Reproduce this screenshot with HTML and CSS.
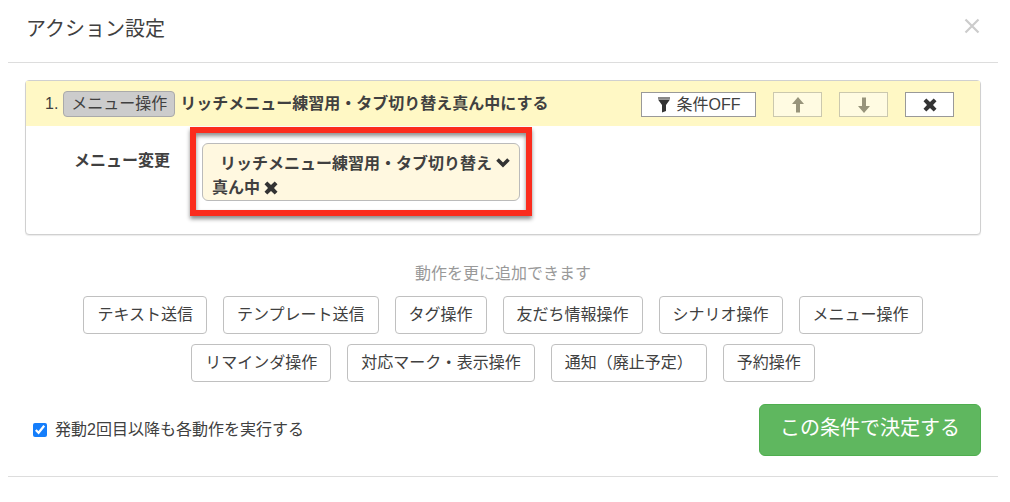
FILE: index.html
```html
<!DOCTYPE html>
<html lang="ja">
<head>
    <meta charset="utf-8">
    <title>アクション設定</title>
    <link rel="stylesheet" href="styles.css">
</head>
<body>
    <div class="modal">
        <div class="modal-header">
            <h1 class="modal-title">アクション設定</h1>
            <button type="button" class="close" aria-label="閉じる">
                <svg width="16" height="16" viewBox="0 0 16 16"><path d="M1.500 1.500l13 13M14.500 1.500l-13 13" stroke="#cccccc" stroke-width="2.200" fill="none"/></svg>
            </button>
        </div>

        <form class="modal-body">
            <div class="panel">
                <div class="panel-heading">
                    <span>1.</span>
                    <span class="badge">メニュー操作</span>
                    <strong class="panel-title">リッチメニュー練習用・タブ切り替え真ん中にする</strong>
                    <div class="tools">
                        <button type="button" class="tool tool-wide">
                            <svg width="14" height="16" viewBox="0 0 14 16"><path d="M1 1h12" stroke="#888" stroke-width="2"/><path d="M1 2.500h12L9 8v6l-4 1.500V8z" fill="#333"/></svg>
                            <span>条件OFF</span>
                        </button>
                        <button type="button" class="tool" disabled aria-label="上へ">
                            <svg width="14" height="16" viewBox="0 0 14 16"><path d="M7 0L13 7H9v8.500H5V7H1z" fill="#333"/></svg>
                        </button>
                        <button type="button" class="tool" disabled aria-label="下へ">
                            <svg width="14" height="16" viewBox="0 0 14 16"><path d="M7 16L1 9H5V0.500h4V9h4z" fill="#333"/></svg>
                        </button>
                        <button type="button" class="tool" aria-label="削除">
                            <svg width="14" height="14" viewBox="0 0 14 14"><path d="M3.300 0.500L7 4l3.700-3.500 2.800 2.800L10 7l3.500 3.700-2.800 2.800L7 10l-3.700 3.500L0.500 10.700 4 7 0.500 3.300z" fill="#333"/></svg>
                        </button>
                    </div>
                </div>
                <div class="panel-content">
                    <label class="field-label" for="menu">メニュー変更</label>
                    <div class="highlight">
                        <button type="button" class="menu-select" id="menu">
                            <span class="menu-name">リッチメニュー練習用・タブ切り替え真ん中
                                <svg width="14" height="14" viewBox="0 0 14 14"><path d="M3.300 0.500L7 4l3.700-3.500 2.800 2.800L10 7l3.500 3.700-2.800 2.800L7 10l-3.700 3.500L0.500 10.700 4 7 0.500 3.300z" fill="#333"/></svg></span>
                            <svg class="chevron" width="14" height="24" viewBox="0 0 14 24"><path d="M1.500 7.500L7 13l5.500-5.500" stroke="#333" stroke-width="3.600" fill="none"/></svg>
                        </button>
                    </div>
                </div>
            </div>

            <p class="hint">動作を更に追加できます</p>
            <div class="actions">
                <button type="button" class="action">テキスト送信</button>
                <button type="button" class="action">テンプレート送信</button>
                <button type="button" class="action">タグ操作</button>
                <button type="button" class="action">友だち情報操作</button>
                <button type="button" class="action">シナリオ操作</button>
                <button type="button" class="action">メニュー操作</button>
                <button type="button" class="action">リマインダ操作</button>
                <button type="button" class="action">対応マーク・表示操作</button>
                <button type="button" class="action">通知（廃止予定）</button>
                <button type="button" class="action">予約操作</button>
            </div>

            <div class="bottom">
                <div class="repeat">
                    <input type="checkbox" id="repeat" class="check" checked>
                    <label for="repeat">発動2回目以降も各動作を実行する</label>
                </div>
                <button type="submit" class="submit">この条件で決定する</button>
            </div>
        </form>
    </div>
</body>
</html>
```

FILE: styles.css
```css
* {
    box-sizing: border-box;
}

body {
    margin: 0;
    background-color: #fff;
    color: #404040;
    font-family: "Liberation Sans", "Noto Sans CJK JP", sans-serif;
    font-size: 16px;
    line-height: 24px;
}

button {
    font-family: inherit;
    font-size: 16px;
    line-height: 24px;
    color: #404040;
    cursor: pointer;
}

svg {
    flex: none;
}

.modal {
    margin: 0 12px 0 8px;
}

.modal-header {
    display: flex;
    justify-content: space-between;
    align-items: flex-start;
    padding: 15px 18px 19px;
    border-bottom: 1px solid #ddd;
}

.modal-title {
    margin: 0;
    font-size: 20px;
    font-weight: normal;
    line-height: 28px;
}

.close {
    display: flex;
    margin-top: 3px;
    padding: 0;
    border: none;
    background: none;
}

.modal-body {
    padding: 17px 17px 20px;
    border-bottom: 1px solid #ddd;
}

.panel {
    border: 1px solid #d0d0d0;
    border-radius: 4px;
    background-color: #fff;
    box-shadow: 0 1px 1px rgba(0, 0, 0, 0.08);
}

.panel-heading {
    display: flex;
    align-items: center;
    gap: 5px;
    padding: 9px 26px 9px 19px;
    background-color: #fff8c5;
}

.badge {
    padding: 0 7px;
    border: 1px solid #aaa;
    border-radius: 4px;
    background-color: #ccc;
    white-space: nowrap;
}

.panel-title {
    white-space: nowrap;
}

.tools {
    display: flex;
    gap: 17px;
    margin-left: auto;
    padding-top: 2px;
}

.tool {
    display: flex;
    justify-content: center;
    align-items: center;
    gap: 6px;
    width: 49px;
    height: 25px;
    padding: 0;
    border: 1px solid #999;
    background-color: #fff;
}

.tool-wide {
    width: 115px;
}

.tool:disabled {
    opacity: 0.5;
}

/* メニュー変更の行 */
.panel-content {
    display: flex;
    align-items: flex-start;
    padding: 1px 20px 18px 48px;
}

.field-label {
    margin: 22px 20px 0 0;
    font-weight: bold;
    white-space: nowrap;
}

/* 赤枠の強調 */
.highlight {
    padding: 10px 6px 9px;
    border: 6px solid #fb2c1d;
    box-shadow: 0 3px 4px rgba(0, 0, 0, 0.45), inset 0 3px 4px rgba(0, 0, 0, 0.45);
}

.menu-select {
    display: flex;
    align-items: flex-start;
    width: 318px;
    padding: 8px 9px 0;
    border: 1px solid #bbb;
    border-radius: 6px;
    background-color: #fff8e0;
    font-weight: bold;
    text-align: left;
}

.menu-name {
    flex: 1;
    text-indent: 8px;
}

.menu-name svg {
    vertical-align: -2px;
}

.hint {
    margin: 27px 0 10px;
    color: #999;
    text-align: center;
}

.actions {
    display: flex;
    flex-wrap: wrap;
    justify-content: center;
    gap: 10px 16px;
}

.action {
    padding: 6px 13px;
    border: 1px solid #c0c0c0;
    border-radius: 4px;
    background-color: #fff;
    white-space: nowrap;
}

.bottom {
    display: flex;
    justify-content: space-between;
    align-items: center;
    margin-top: 22px;
}

.repeat {
    display: flex;
    align-items: center;
    gap: 8px;
    padding-left: 8px;
}

.check {
    width: 14px;
    height: 14px;
    margin: 0;
    accent-color: #157efb;
}

.submit {
    padding: 9px 20px 13px;
    border: 1px solid #4fae4f;
    border-radius: 6px;
    background-color: #5fb75f;
    color: #fff;
    font-size: 20px;
    line-height: 28px;
}
```
